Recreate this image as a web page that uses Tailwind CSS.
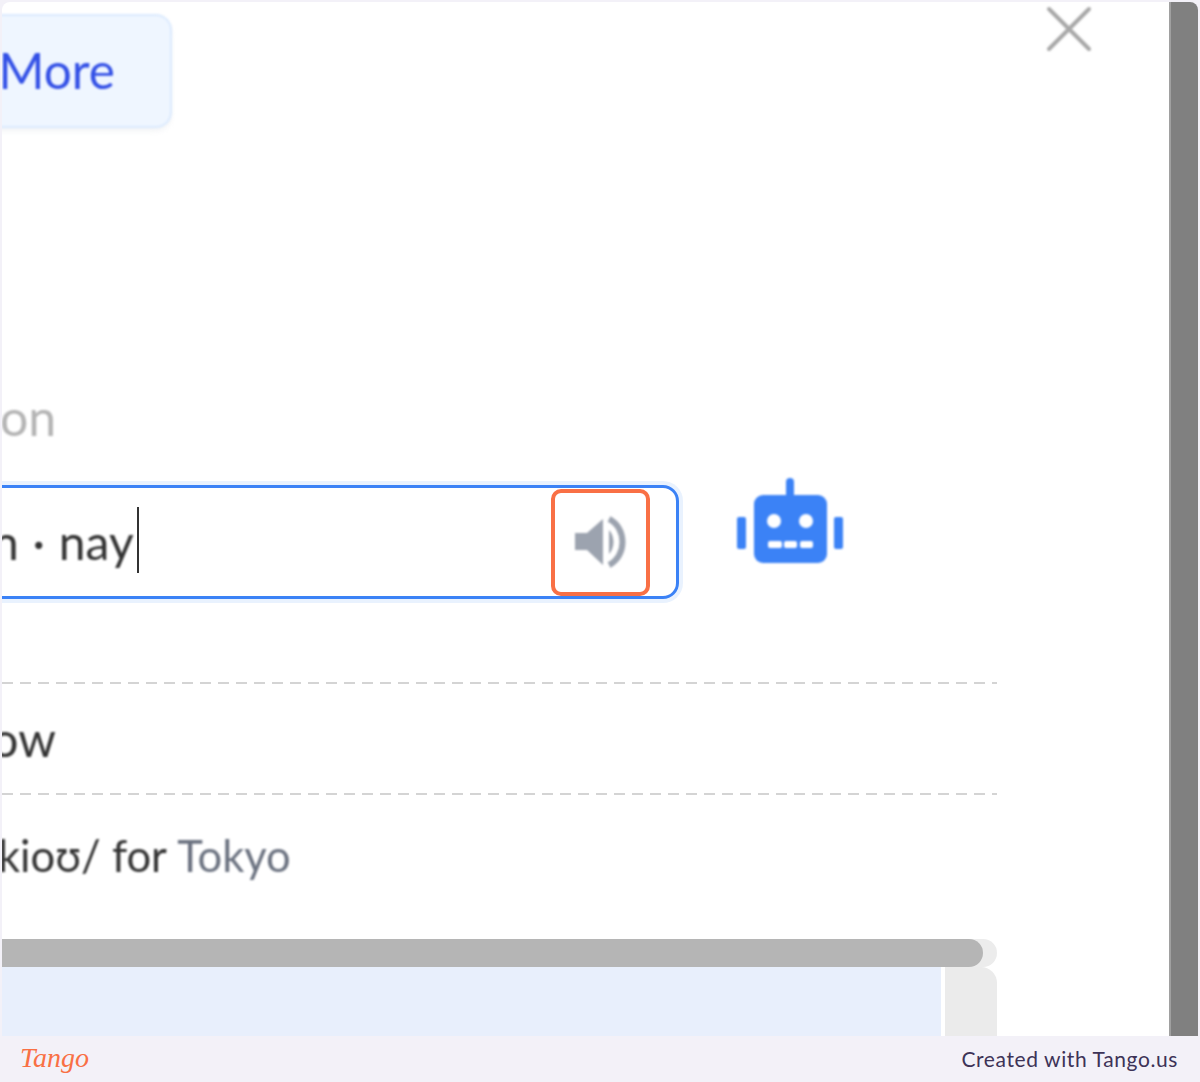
<!DOCTYPE html>
<html lang="en">
  <head>
    <meta charset="UTF-8" />
    <meta name="viewport" content="width=device-width, initial-scale=1.0" />
    <title>Pronunciation</title>
    <script src="https://cdn.jsdelivr.net/npm/@tailwindcss/browser@4"></script>
  </head>
  <body class="w-[1200px] h-[1082px] overflow-hidden bg-[#f3f1f8] font-['Lato',sans-serif]">
    <div class="flex h-[1036px] pt-[2px] pl-[2px] pr-[2px]">
      <!-- modal -->
      <div class="relative flex-1 bg-white rounded-tl-lg overflow-hidden">
        <div class="w-[995px] flex flex-col">
          <!-- more button -->
          <div class="mt-[12px] ml-[-40px] w-[210px] h-[114px] flex items-center justify-end pr-[55px] pb-[2px] bg-[#eff6ff] border-2 border-[#dbeafe] rounded-2xl shadow-md shadow-gray-100 text-[49.5px] text-[#3350e6] blur-[1px]">More</div>

          <div class="mt-[264px] h-[50px] flex items-center ml-[-2px] text-[50px] text-[#b4b4b4] blur-[1px]">on</div>

          <!-- input row -->
          <div class="mt-[43px] flex items-center">
            <div class="relative ml-[-30px] w-[707px] h-[114px] border-[3px] border-[#3b82f6] rounded-2xl ring-4 ring-blue-100/60 flex items-center justify-between">
              <div class="flex items-center pl-[17px] text-[48px] text-[#333] whitespace-nowrap">
                <span class="blur-[1px] [word-spacing:1.5px]">n · nay</span><span class="w-[2px] h-[66px] mt-[-4px] bg-[#333] ml-[3px]"></span>
              </div>
              <div class="mr-[26px] w-[99px] h-[107px] border-[4px] border-[#f97045] rounded-[10px] flex items-center justify-center">
                <svg class="blur-[1px]" width="60" height="56" viewBox="0 0 60 56" fill="none">
                  <path d="M4 19h12L32 5v46L16 36H4z" fill="#9ca3af" />
                  <path d="M38 16c6 6 6 18 0 24z" fill="#9ca3af" />
                  <path d="M38 5c18 9 18 37 0 46" stroke="#9ca3af" stroke-width="6" />
                </svg>
              </div>
            </div>
            <svg class="ml-[58px] mt-[-42px] blur-[0.8px]" width="108" height="86" viewBox="0 0 108 86" fill="none">
              <rect x="49" y="0" width="8" height="20" rx="4" fill="#3b82f6" />
              <rect x="17" y="17" width="73" height="68" rx="9" fill="#3b82f6" />
              <rect x="0" y="39" width="9" height="32" rx="2" fill="#3b82f6" />
              <rect x="97" y="39" width="9" height="32" rx="2" fill="#3b82f6" />
              <circle cx="37" cy="43" r="7" fill="#fff" />
              <circle cx="69" cy="43" r="7" fill="#fff" />
              <rect x="31" y="63" width="14" height="7" rx="2" fill="#fff" />
              <rect x="47" y="63" width="13" height="7" rx="2" fill="#fff" />
              <rect x="63" y="63" width="13" height="7" rx="2" fill="#fff" />
            </svg>
          </div>

          <div class="mt-[83px] h-[2px] bg-[repeating-linear-gradient(90deg,#d4d4d4_0_11px,transparent_11px_18px)] blur-[0.5px]"></div>
          <div class="h-[109px] flex items-center ml-[-22px] text-[48px] text-[#333] blur-[1px]">low</div>
          <div class="h-[2px] bg-[repeating-linear-gradient(90deg,#d4d4d4_0_11px,transparent_11px_18px)] blur-[0.5px]"></div>
          <div class="h-[122px] flex items-center ml-[-4px] text-[43.5px] text-[#333] whitespace-nowrap blur-[1px]">
            <span>kioʊ/ for&nbsp;</span><span class="text-[#6b7280]">Tokyo</span>
          </div>

          <!-- scrollbar -->
          <div class="mt-[22px] h-[28px] bg-[#ececec] rounded-r-full">
            <div class="w-[981px] h-[28px] bg-[#b5b5b5] rounded-r-full"></div>
          </div>
          <div class="flex gap-[4px] h-[69px]">
            <div class="w-[939px] bg-[#e8effc]"></div>
            <div class="flex-1 bg-[#ebebeb] rounded-tr-2xl"></div>
          </div>
        </div>

        <!-- close -->
        <svg class="absolute top-[4px] left-[1044px] blur-[1px]" width="46" height="46" viewBox="0 0 46 46" stroke="#a8a8a8" stroke-width="4" stroke-linecap="round">
          <path d="M3 3l40 40M43 3L3 43" />
        </svg>
      </div>
      <!-- page scrollbar -->
      <div class="w-[29px] bg-[#808080] border-l-2 border-[#a0a0a0] rounded-tr-lg"></div>
    </div>

    <!-- tango footer -->
    <div class="h-[46px] flex items-center justify-between pl-[20px] pr-[22px]">
      <span class="font-['Liberation_Serif',serif] italic text-[28px] text-[#f97045] pb-[2px]">Tango</span>
      <span class="text-[21px] tracking-[0.6px] text-[#3d3357]">Created with Tango.us</span>
    </div>
  </body>
</html>
